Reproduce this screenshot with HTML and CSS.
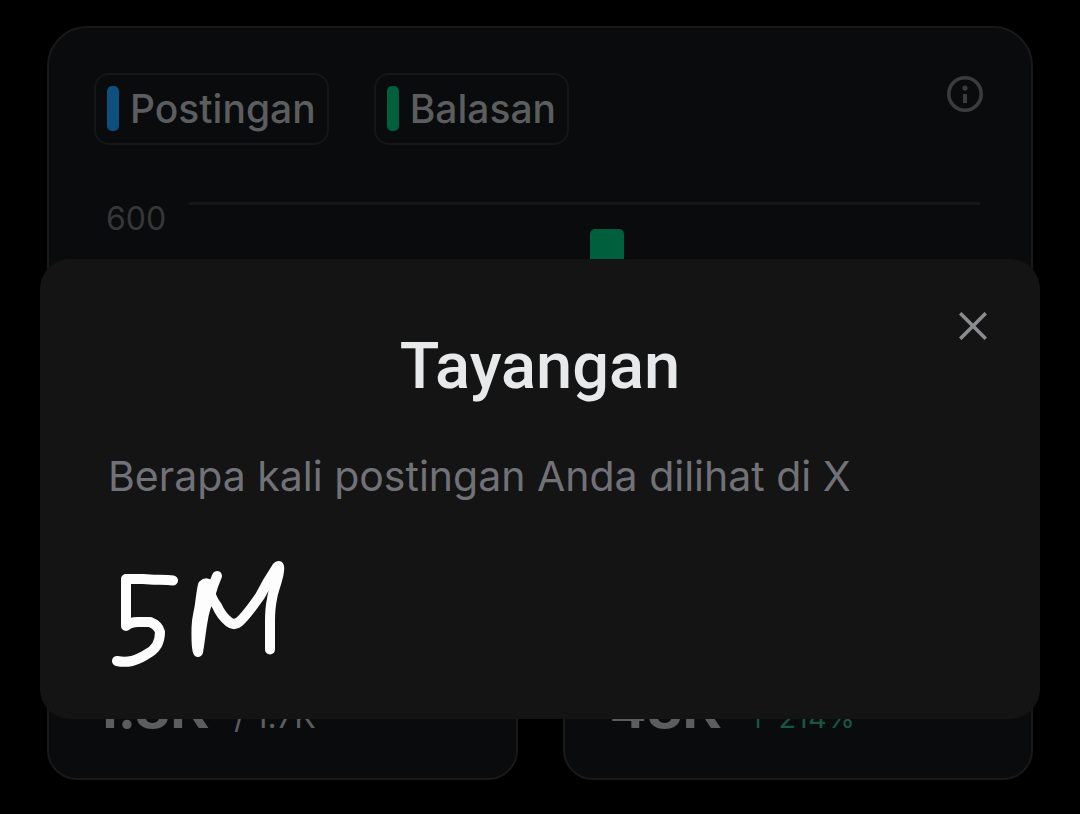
FILE: index.html
```html
<!DOCTYPE html>
<html lang="id">
<head>
    <meta charset="UTF-8">
    <meta name="viewport" content="width=device-width, initial-scale=1">
    <title>Tayangan</title>
    <link rel="stylesheet" href="styles.css">
</head>
<body>
    <main class="analytics">
        <section class="chart-card">
            <header class="chart-header">
                <div class="legend">
                    <span class="legend-item"><span class="legend-mark posts"></span>Postingan</span>
                    <span class="legend-item"><span class="legend-mark replies"></span>Balasan</span>
                </div>
                <button class="icon-button info-button" type="button" aria-label="Info">
                    <svg width="36" height="36" viewBox="0 0 36 36">
                        <circle cx="18" cy="18" r="16.2" fill="none" stroke="currentColor" stroke-width="3.6"/>
                        <circle cx="18" cy="12" r="2.6" fill="currentColor"/>
                        <path d="M16 18h4v9h-4z" fill="currentColor"/>
                    </svg>
                </button>
            </header>
            <div class="chart">
                <span class="axis-label">600</span>
                <div class="plot">
                    <div class="bar"></div>
                </div>
            </div>
        </section>
        <section class="metrics">
            <div class="metric-card">
                <strong class="metric-value">1.8K</strong>
                <span class="metric-total">/ 1.7K</span>
            </div>
            <div class="metric-card">
                <strong class="metric-value">48K</strong>
                <span class="metric-change">↑ 214%</span>
            </div>
        </section>
    </main>

    <div class="overlay">
        <div class="dialog" role="dialog" aria-modal="true" aria-labelledby="dialog-title">
            <button class="icon-button close-button" type="button" aria-label="Tutup">
                <svg width="28" height="28" viewBox="0 0 28 28">
                    <path d="M1.2 1.2l25.6 25.6M26.8 1.2L1.2 26.8" fill="none" stroke="currentColor" stroke-width="3.6"/>
                </svg>
            </button>
            <h1 class="dialog-title" id="dialog-title">Tayangan</h1>
            <p class="dialog-text">Berapa kali postingan Anda dilihat di X</p>
            <svg class="scribble" width="176" height="108" viewBox="0 0 176 108" role="img" aria-label="5M">
                <g fill="none" stroke="currentColor" stroke-width="10" stroke-linecap="round" stroke-linejoin="round">
                    <path d="M61 19.500C54 18.500 46 19 38 18.500L31 18H14V65C17 62 20 61 26 61H38C43 63 47 67 48 71C48 76 47 80 45 84C42 89 39 91 35 93C31 96 26 98 20 100C15 101 10 101 5 100"/>
                    <path d="M105 15L101 25C98 37 93 44 91 58C89 68 88 80 86 91C84 86 84.500 78 84.500 67C84.500 56 87 52 88 43C89 35 90 28 91 24Q94 21 98 24"/>
                    <path d="M97 25C98 34 101 40 105 45C108 52 112 57 117 61Q122 65 127 61C134 55 141 45 148 35C152 27 159 15 165 6Q168 3 167 10C166 20 161 29 160 38C158 47 158 54 158 60V88.500"/>
                    <path d="M94 28L88 52L86 82"/>
                </g>
            </svg>
        </div>
    </div>
</body>
</html>
```

FILE: styles.css
```css
* {
    box-sizing: border-box;
}

body {
    background: #000;
    color: #5c5d5f;
    margin: 0;
    font-family: Inter, sans-serif;
}

.analytics {
    display: flex;
    flex-direction: column;
    gap: 45px;
    padding: 26px 47px 35px;
}

.chart-card,
.metric-card {
    background: #0a0b0d;
    border: 2px solid #19191a;
}

.chart-card {
    border-radius: 40px;
    padding: 45px 45px 40px;
}

.chart-header {
    display: flex;
    align-items: flex-start;
    justify-content: space-between;
}

.legend {
    display: flex;
    gap: 45px;
}

.legend-item {
    display: flex;
    align-items: center;
    gap: 11px;
    height: 72px;
    padding: 0 11px 1px;
    border: 2px solid #151617;
    border-radius: 15px;
    font-size: 39px;
    font-weight: 500;
}

.legend-mark {
    width: 12px;
    height: 45px;
    border-radius: 5px;
}

.posts {
    background: #0e507d;
}

.replies {
    background: #005f3d;
}

.icon-button {
    display: flex;
    padding: 0;
    border: 0;
    background: none;
    cursor: pointer;
}

.info-button {
    margin: 3px 3px 0 0;
    color: #3b3c3e;
}

.chart {
    display: flex;
    gap: 23px;
    margin: 57px 6px 0 12px;
}

.axis-label {
    color: #363739;
    font-size: 32px;
    line-height: 34px;
}

.plot {
    flex: 1;
    height: 287px;
    padding-top: 24px;
    border-top: 3px solid #151617;
}

.bar {
    width: 34px;
    height: 100%;
    margin-left: 50.7%;
    border-radius: 5px 5px 0 0;
    background: #005f3d;
}

.metrics {
    display: grid;
    grid-template-columns: 1fr 1fr;
    gap: 45px;
}

.metric-card {
    display: flex;
    align-items: baseline;
    gap: 24px;
    padding: 100px 45px 30px;
    border-radius: 30px;
}

.metric-value {
    font-size: 55px;
    line-height: 60px;
}

.metric-total {
    font-size: 32px;
    line-height: 60px;
}

.metric-change {
    color: #18573f;
    font-size: 29px;
    line-height: 60px;
}

.overlay {
    position: fixed;
    inset: 0;
    padding: 259px 40px 0;
}

.dialog {
    position: relative;
    padding: 67px 68px 50px;
    border-radius: 30px;
    background: #141414;
}

.close-button {
    position: absolute;
    top: 53px;
    right: 53px;
    color: #8b8c8f;
}

.dialog-title {
    margin: 0;
    color: #e7e9ea;
    font-family: Roboto, sans-serif;
    font-size: 65px;
    font-weight: 500;
    line-height: 80px;
    text-align: center;
}

.dialog-text {
    margin: 40px 0 55px;
    color: #717278;
    font-size: 41px;
    line-height: 60px;
}

.scribble {
    display: block;
    margin-left: 4px;
    color: #fdfdfd;
}
```
